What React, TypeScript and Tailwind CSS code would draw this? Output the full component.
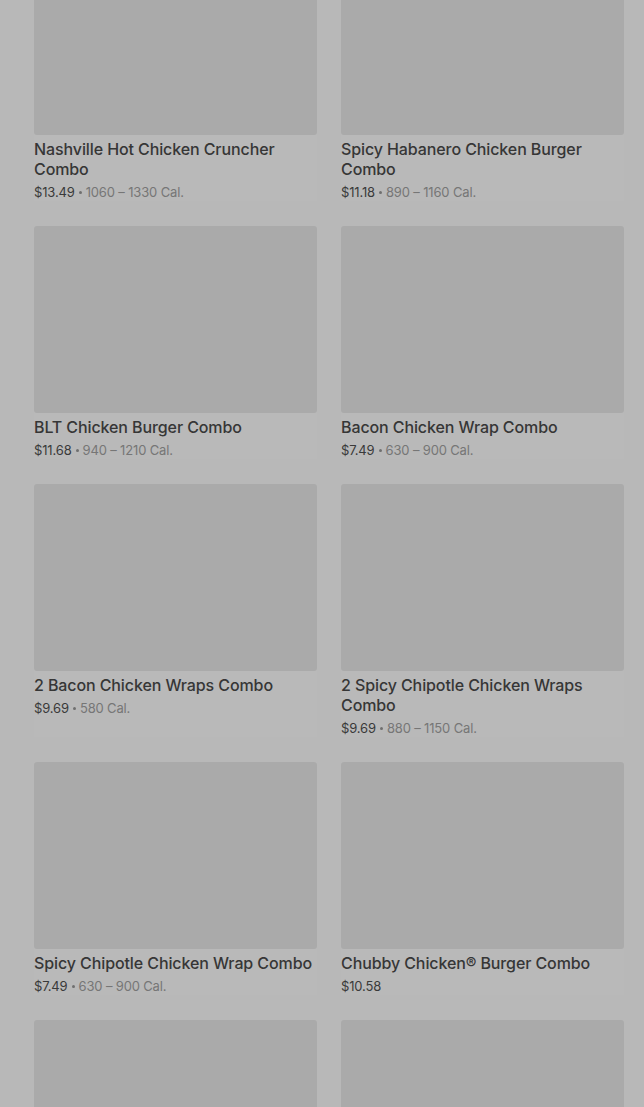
const items = [
  { name: "Nashville Hot Chicken Cruncher Combo", price: "$13.49", cal: "1060 – 1330 Cal." },
  { name: "Spicy Habanero Chicken Burger Combo", price: "$11.18", cal: "890 – 1160 Cal." },
  { name: "BLT Chicken Burger Combo", price: "$11.68", cal: "940 – 1210 Cal." },
  { name: "Bacon Chicken Wrap Combo", price: "$7.49", cal: "630 – 900 Cal." },
  { name: "2 Bacon Chicken Wraps Combo", price: "$9.69", cal: "580 Cal." },
  { name: "2 Spicy Chipotle Chicken Wraps Combo", price: "$9.69", cal: "880 – 1150 Cal." },
  { name: "Spicy Chipotle Chicken Wrap Combo", price: "$7.49", cal: "630 – 900 Cal." },
  { name: "Chubby Chicken® Burger Combo", price: "$10.58", cal: "" },
  { name: "", price: "", cal: "" },
  { name: "", price: "", cal: "" },
];

const App = () => {
  return (
    <main
      className="h-[1107px] overflow-hidden bg-[#b8b8b8] pl-[34px] pr-[20px]"
      style={{ fontFamily: "Inter, 'Liberation Sans', sans-serif" }}
    >
      <div className="-mt-[52px] grid grid-cols-2 gap-x-6 gap-y-[25px]">
        {items.map((item, idx) => (
          <div key={idx} className="flex flex-col bg-[#b9b9b9]">
            <div className="h-[187px] rounded-[3px] bg-[#aaaaaa]" />
            {item.name && (
              <div className="pt-1">
                <h3 className="text-[16px] leading-5 font-medium text-[#363636] tracking-[-0.1px]">
                  {item.name}
                </h3>
                <div className="mt-1 flex h-[18px] items-center text-[13px] leading-[18px] tracking-[-0.15px] text-[#3a3a3a]">
                  <span>{item.price}</span>
                  {item.cal && (
                    <>
                      <span className="mx-[4px] h-[3px] w-[3px] rounded-full bg-[#6f6f6f]" />
                      <span className="text-[#767676]">{item.cal}</span>
                    </>
                  )}
                </div>
              </div>
            )}
          </div>
        ))}
      </div>
    </main>
  );
};

export default App;
